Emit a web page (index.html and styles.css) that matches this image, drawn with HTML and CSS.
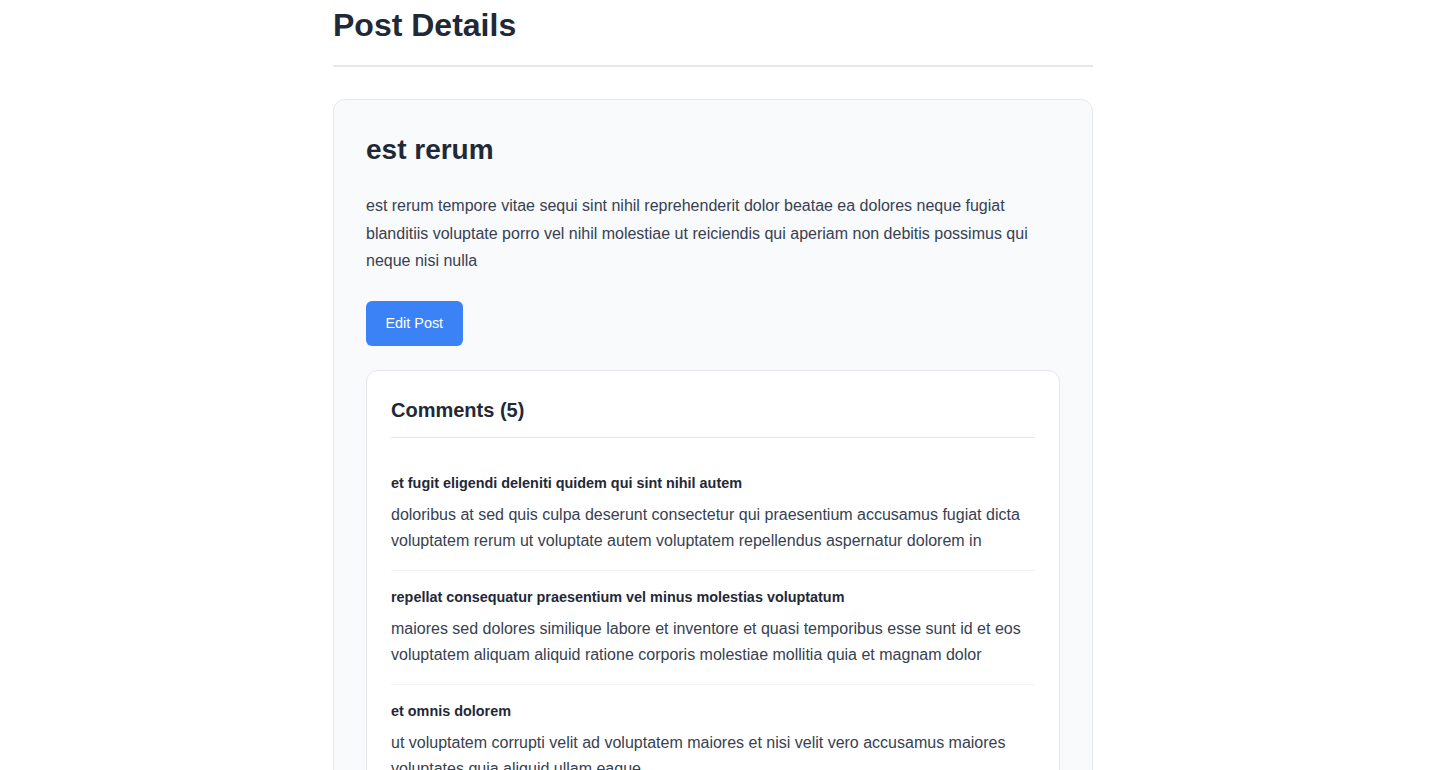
FILE: index.html
```html
<!DOCTYPE html>
<html lang="en">
<head>
<meta charset="utf-8">
<title>Post Details</title>
<link rel="stylesheet" href="styles.css">
</head>
<body>
<div class="page">
  <h1 class="page-title">Post Details</h1>
  <article class="post-card">
    <h2 class="post-title">est rerum</h2>
    <p class="post-body">est rerum tempore vitae sequi sint nihil reprehenderit dolor beatae ea dolores neque fugiat blanditiis voluptate porro vel nihil molestiae ut reiciendis qui aperiam non debitis possimus qui neque nisi nulla</p>
    <button class="btn-edit" type="button">Edit Post</button>
    <section class="comments">
      <h3 class="comments-title">Comments (5)</h3>
      <ul class="comment-list">
        <li class="comment">
          <div class="comment-name">et fugit eligendi deleniti quidem qui sint nihil autem</div>
          <p class="comment-body">doloribus at sed quis culpa deserunt consectetur qui praesentium accusamus fugiat dicta voluptatem rerum ut voluptate autem voluptatem repellendus aspernatur dolorem in</p>
        </li>
        <li class="comment">
          <div class="comment-name">repellat consequatur praesentium vel minus molestias voluptatum</div>
          <p class="comment-body">maiores sed dolores similique labore et inventore et quasi temporibus esse sunt id et eos voluptatem aliquam aliquid ratione corporis molestiae mollitia quia et magnam dolor</p>
        </li>
        <li class="comment">
          <div class="comment-name">et omnis dolorem</div>
          <p class="comment-body">ut voluptatem corrupti velit ad voluptatem maiores et nisi velit vero accusamus maiores voluptates quia aliquid ullam eaque</p>
        </li>
        <li class="comment">
          <div class="comment-name">provident id voluptas</div>
          <p class="comment-body">sapiente assumenda molestiae atque adipisci laborum distinctio aperiam et ab ut omnis et occaecati aspernatur odit sit rem expedita quas enim ipsam minus</p>
        </li>
        <li class="comment">
          <div class="comment-name">eaque et deleniti atque tenetur ut quo ut</div>
          <p class="comment-body">voluptate iusto quis nobis reprehenderit ipsum amet nulla quia quas dolores velit et non aut quia necessitatibus nostrum quaerat nulla et accusamus nisi facilis</p>
        </li>
      </ul>
    </section>
  </article>
</div>
</body>
</html>
```
FILE: styles.css
```css
* {
  box-sizing: border-box;
}

html, body {
  margin: 0;
  padding: 0;
  background: #ffffff;
}

body {
  font-family: "Liberation Sans", Arial, sans-serif;
  color: #374151;
  padding-right: 12px;
}

.page {
  max-width: 760px;
  margin: 0 auto;
  padding: 7px 0 40px;
}

.page-title {
  margin: 0 0 32px;
  font-size: 32px;
  line-height: 1.15;
  font-weight: 700;
  color: #1f2937;
  padding-bottom: 21px;
  border-bottom: 2px solid #e5e7eb;
}

.post-card {
  background: #f9fafb;
  border: 1px solid #e5e7eb;
  border-radius: 12px;
  padding: 33px 32px 32px;
}

.post-title {
  margin: 0 0 26px;
  font-size: 28px;
  line-height: 1.2;
  font-weight: 700;
  color: #1f2937;
}

.post-body {
  margin: 0 0 27px;
  font-size: 16px;
  line-height: 1.7;
  color: #374151;
}

.btn-edit {
  display: block;
  font-family: inherit;
  font-size: 14.4px;
  line-height: 21px;
  padding: 12px 19.5px;
  border: 0;
  border-radius: 6px;
  background: #3b82f6;
  color: #ffffff;
  cursor: pointer;
  margin: 0 0 24px;
}

.comments {
  background: #ffffff;
  border: 1px solid #e5e7eb;
  border-radius: 12px;
  padding: 24px;
}

.comments-title {
  margin: 0 0 19px;
  font-size: 20px;
  line-height: 30px;
  font-weight: 700;
  color: #1f2937;
  padding-bottom: 12px;
  border-bottom: 1px solid #e5e7eb;
}

.comment-list {
  list-style: none;
  margin: 0;
  padding: 0;
}

.comment {
  padding: 16px 0;
  border-bottom: 1px solid #f3f4f6;
}

.comment:last-child {
  border-bottom: 0;
}

.comment-name {
  font-size: 14.4px;
  line-height: 21px;
  font-weight: 700;
  color: #1f2937;
  margin-bottom: 8px;
}

.comment-body {
  margin: 0;
  font-size: 16px;
  line-height: 26px;
  color: #374151;
}
```
